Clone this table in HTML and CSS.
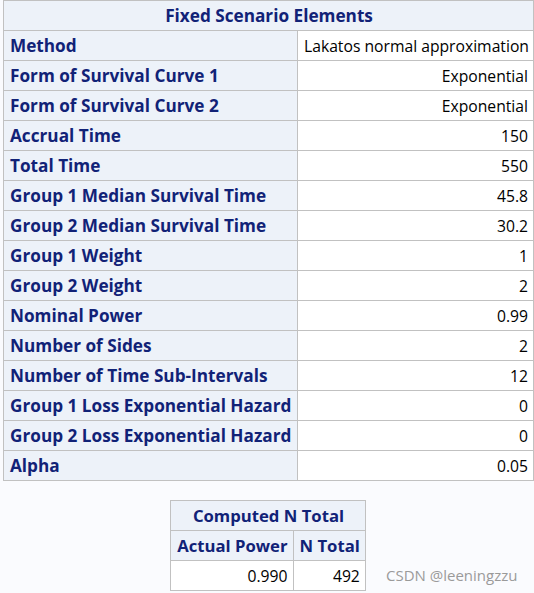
FILE: index.html
```html
<!DOCTYPE html>
<html>
<head>
<meta charset="utf-8">
<link rel="stylesheet" href="styles.css">
</head>
<body>
<div class="page">
  <table class="tbl main">
    <colgroup><col class="c1"><col class="c2"></colgroup>
    <thead>
      <tr><th class="title" colspan="2">Fixed Scenario Elements</th></tr>
    </thead>
    <tbody>
      <tr><th class="rh">Method</th><td>Lakatos normal approximation</td></tr>
      <tr><th class="rh">Form of Survival Curve 1</th><td>Exponential</td></tr>
      <tr><th class="rh">Form of Survival Curve 2</th><td>Exponential</td></tr>
      <tr><th class="rh">Accrual Time</th><td>150</td></tr>
      <tr><th class="rh">Total Time</th><td>550</td></tr>
      <tr><th class="rh">Group 1 Median Survival Time</th><td>45.8</td></tr>
      <tr><th class="rh">Group 2 Median Survival Time</th><td>30.2</td></tr>
      <tr><th class="rh">Group 1 Weight</th><td>1</td></tr>
      <tr><th class="rh">Group 2 Weight</th><td>2</td></tr>
      <tr><th class="rh">Nominal Power</th><td>0.99</td></tr>
      <tr><th class="rh">Number of Sides</th><td>2</td></tr>
      <tr><th class="rh">Number of Time Sub-Intervals</th><td>12</td></tr>
      <tr><th class="rh">Group 1 Loss Exponential Hazard</th><td>0</td></tr>
      <tr><th class="rh">Group 2 Loss Exponential Hazard</th><td>0</td></tr>
      <tr><th class="rh">Alpha</th><td>0.05</td></tr>
    </tbody>
  </table>

  <div class="bottom">
    <table class="tbl small">
      <thead>
        <tr><th class="title" colspan="2">Computed N Total</th></tr>
        <tr><th class="colh">Actual Power</th><th class="colh">N Total</th></tr>
      </thead>
      <tbody>
        <tr><td>0.990</td><td>492</td></tr>
      </tbody>
    </table>
    <span class="mark">CSDN @leeningzzu</span>
  </div>
</div>
</body>
</html>
```

FILE: styles.css
```css
html, body {
  margin: 0;
  padding: 0;
  background: #fafbfe;
}
body {
  font-family: "Open Sans", "DejaVu Sans", sans-serif;
  font-size: 16px;
  color: #000;
}
.page {
  width: 530px;
  padding-left: 3px;
}
.tbl {
  border-collapse: collapse;
  border: 1px solid #c1c1c1;
}
.tbl th, .tbl td {
  border: 1px solid #c1c1c1;
  height: 30px;
  padding: 0 5px 0 6px;
  box-sizing: border-box;
  white-space: nowrap;
  line-height: 20px;
}
.tbl th {
  background: #edf2f9;
  color: #112277;
  font-weight: bold;
  font-size: 17.2px;
}
.tbl td {
  background: #fff;
  text-align: right;
  font-size: 15.7px;
}
.main {
  width: 530px;
  table-layout: fixed;
}
.main .c1 {
  width: 294px;
}
.main .c2 {
  width: 236px;
}
.main .rh {
  text-align: left;
}
.title {
  text-align: center;
}
.bottom {
  position: relative;
  margin-top: 19px;
  display: flex;
  justify-content: center;
}
.small th {
  font-size: 16.7px;
}
.small .colh {
  text-align: center;
}
.mark {
  position: absolute;
  left: 383px;
  top: 65px;
  font-size: 15px;
  color: #9a9a9a;
}
```
